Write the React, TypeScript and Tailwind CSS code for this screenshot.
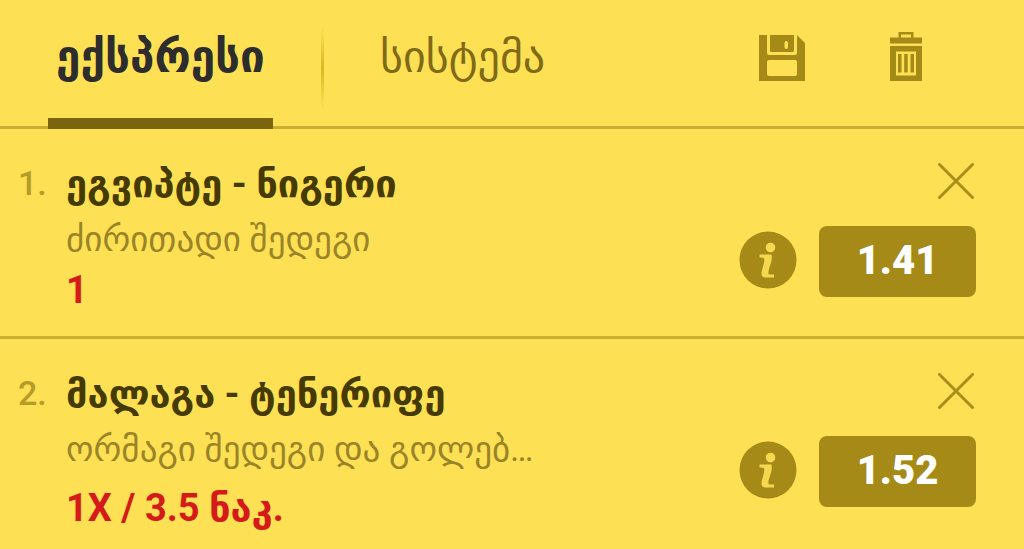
import { useState } from "react";

const TABS = [
  { id: "express", label: "ექსპრესი" },
  { id: "system", label: "სისტემა" },
];

const BETS = [
  {
    id: 1,
    teams: "ეგვიპტე - ნიგერი",
    market: "ძირითადი შედეგი",
    pick: "1",
    odds: "1.41",
  },
  {
    id: 2,
    teams: "მალაგა - ტენერიფე",
    market: "ორმაგი შედეგი და გოლებ…",
    pick: "1X / 3.5 ნაკ.",
    odds: "1.52",
  },
];

const SaveIcon = () => (
  <svg width="46" height="46" viewBox="0 0 46 46" fill="#a58a17">
    <path
      fillRule="evenodd"
      d="M0 0H8V18Q8 20 10 20H36Q38 20 38 18V0L46 8V46H0ZM10 25Q8 25 8 27V39Q8 41 10 41H36Q38 41 38 39V27Q38 25 36 25Z"
    />
    <path
      fillRule="evenodd"
      d="M11 0H35V15.500Q35 17 33.500 17H12.500Q11 17 11 15.500ZM27.200 6Q25.500 6 25.500 8V12Q25.500 14 27.200 14Q29 14 29 12V8Q29 6 27.200 6Z"
    />
  </svg>
);

const TrashIcon = () => (
  <svg width="32" height="49" viewBox="0 0 32 49" fill="#a58a17">
    <path
      fillRule="evenodd"
      d="M0 5.500H8.500V0H23.500V5.500H32V11.500H0ZM11 2.500V5.500H21V2.500Z"
    />
    <path fillRule="evenodd" d="M0 14H32V49H0ZM6 19.500V43.500H26V19.500Z" />
    <path d="M8 22h3.500v18.500H8zM14.200 22h3.500v18.500h-3.500zM20.500 22h3.500v18.500h-3.500z" />
  </svg>
);

const InfoIcon = () => (
  <svg width="58" height="58" viewBox="0 0 58 58">
    <circle cx="29" cy="29" r="28.500" fill="#a58a17" />
    <circle cx="31.500" cy="16.500" r="4.800" fill="#f5d850" />
    <path
      d="M20.500 23.500H32.500C33.500 29 31.500 33 30.300 37C29.300 40.500 29 42.500 30 43.500H35V46.500H26C22 46 22 43 23 39C24 35 26 31 25 27.500C24.500 26.500 22.500 26.500 20.500 26.500Z"
      fill="#f5d850"
    />
  </svg>
);

const CloseIcon = () => (
  <svg width="36" height="36" viewBox="0 0 36 36">
    <path
      d="M1.500 1.500L34.500 34.500M34.500 1.500L1.500 34.500"
      stroke="#a98e1c"
      strokeWidth="3"
      strokeLinecap="round"
    />
  </svg>
);

const App = () => {
  const [activeTab, setActiveTab] = useState("express");
  const [bets, setBets] = useState(BETS);

  const removeBet = (id: number) => {
    setBets(bets.filter((bet) => bet.id !== id));
  };

  return (
    <div className="min-h-screen overflow-hidden bg-[#fde053] font-['Roboto','DejaVu_Sans',sans-serif]">
      <header className="flex h-[129px] items-stretch border-b-[3px] border-[#c9ae30] pl-12">
        {TABS.map((tab, index) => (
          <div key={tab.id} className="flex">
            {index > 0 && (
              <div className="mx-12 mt-7 h-20 w-[3px] bg-linear-to-b from-transparent via-[#d9b91f] to-transparent" />
            )}
            <button
              onClick={() => setActiveTab(tab.id)}
              className={
                activeTab === tab.id
                  ? "-mb-[3px] w-[225px] border-b-[11px] border-[#7a6410] pb-1 text-[44px] font-bold text-[#2d2d2d]"
                  : "px-2 pb-3 text-[44px] text-[#7f6b17]"
              }
            >
              {tab.label}
            </button>
          </div>
        ))}
        <div className="ml-auto flex items-start gap-[85px] pt-8 pr-[102px]">
          <button aria-label="save" className="pt-[3px]">
            <SaveIcon />
          </button>
          <button aria-label="clear" onClick={() => setBets([])}>
            <TrashIcon />
          </button>
        </div>
      </header>

      <ul>
        {bets.map((bet, index) => (
          <li
            key={bet.id}
            className="flex justify-between border-b-[3px] border-[#c9ae30] pt-8 pr-12 pb-[21px] pl-[18px]"
          >
            <div className="flex">
              <div className="w-12 text-[34px] leading-[44px] font-medium text-[#b59b27]">
                {index + 1}.
              </div>
              <div>
                <div className="text-[38px] leading-[46px] font-bold text-[#453a00]">
                  {bet.teams}
                </div>
                {/* a cut off market name leaves some room under it */}
                <div
                  className={
                    bet.market.endsWith("…")
                      ? "pt-2 pb-2 text-[35px] leading-[50px] text-[#9a8428]"
                      : "pt-2 text-[35px] leading-[50px] text-[#9a8428]"
                  }
                >
                  {bet.market}
                </div>
                <div className="text-[38px] leading-[50px] font-bold text-[#d51a1a]">
                  {bet.pick}
                </div>
              </div>
            </div>
            <div className="flex flex-col items-end gap-[27px]">
              <button aria-label="remove" onClick={() => removeBet(bet.id)} className="mt-0.5 mr-0.5">
                <CloseIcon />
              </button>
              <div className="flex items-start gap-[22px]">
                <button aria-label="info" className="pt-[5px]">
                  <InfoIcon />
                </button>
                <button className="h-[71px] w-[157px] rounded-lg bg-[#a58a17] pb-0.5 text-[40px] font-black text-white">
                  {bet.odds}
                </button>
              </div>
            </div>
          </li>
        ))}
      </ul>
    </div>
  );
};

export default App;
